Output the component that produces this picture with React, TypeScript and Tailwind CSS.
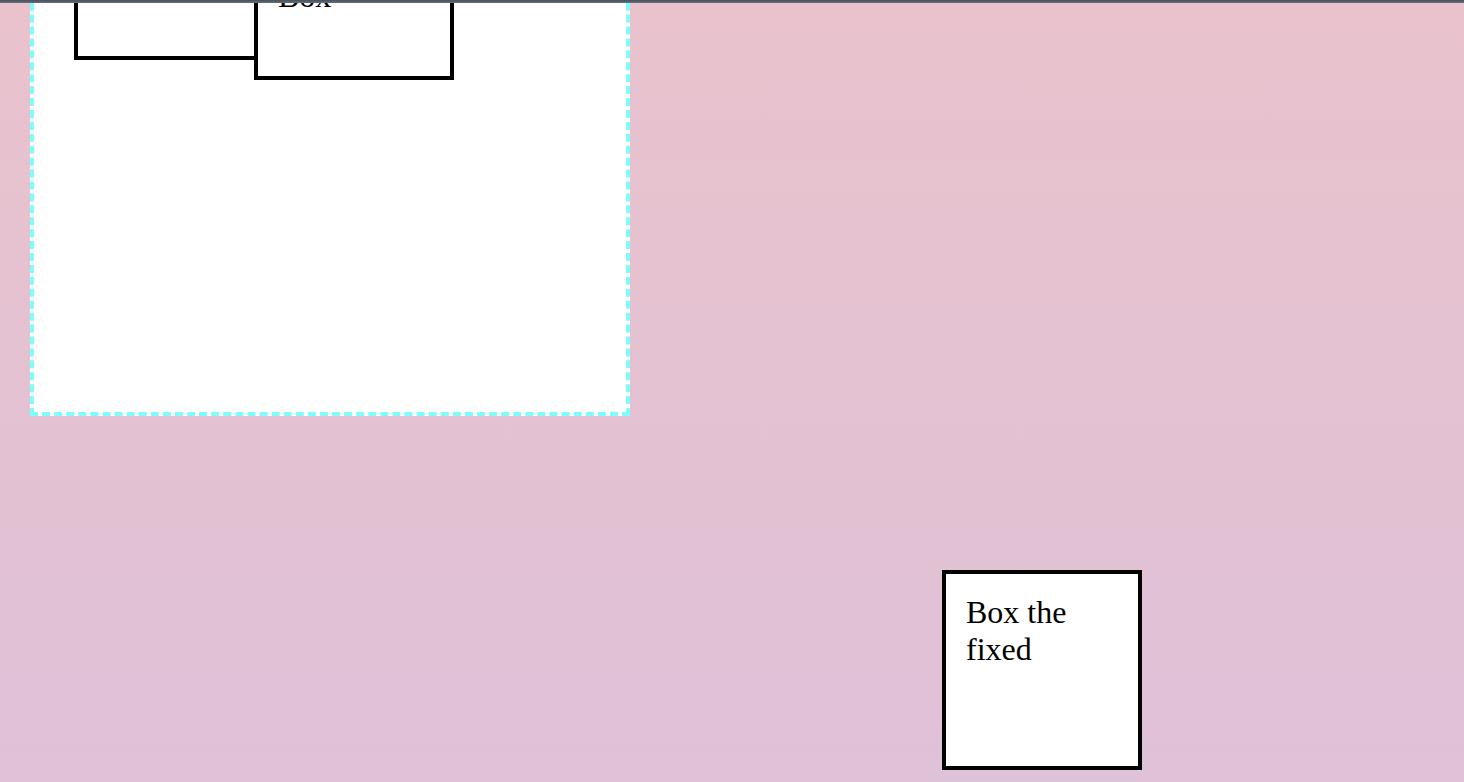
// Positioning demo — page scrolled down, fixed box stays in the viewport

export default function App() {
  return (
    <div className="relative h-screen overflow-hidden bg-gradient-to-b from-[#e9c2cc] to-[#dfc1d8] font-['Liberation_Serif',serif] text-[32px] leading-[1.15] text-black">
      {/* window edge */}
      <div className="absolute inset-x-0 top-0 z-20 h-[3px] bg-gradient-to-b from-[#46515b] to-[#65707a]" />

      {/* dashed container, top scrolled out of view */}
      <div className="mt-[-200px] ml-[30px] h-[616px] w-[600px] border-4 border-dashed border-[#7ffcfc] bg-white">
        <div className="relative mt-[56px] ml-[40px] h-[200px] w-[200px]">
          <div className="h-full w-full border-4 border-black bg-white" />
          <div className="absolute left-[180px] top-[20px] h-[200px] w-[200px] border-4 border-black bg-white p-5">
            Box the relative Box
          </div>
        </div>
      </div>

      {/* fixed box */}
      <div className="fixed left-[942px] top-[570px] h-[200px] w-[200px] border-4 border-black bg-white p-5">
        Box the fixed
      </div>
    </div>
  );
}
